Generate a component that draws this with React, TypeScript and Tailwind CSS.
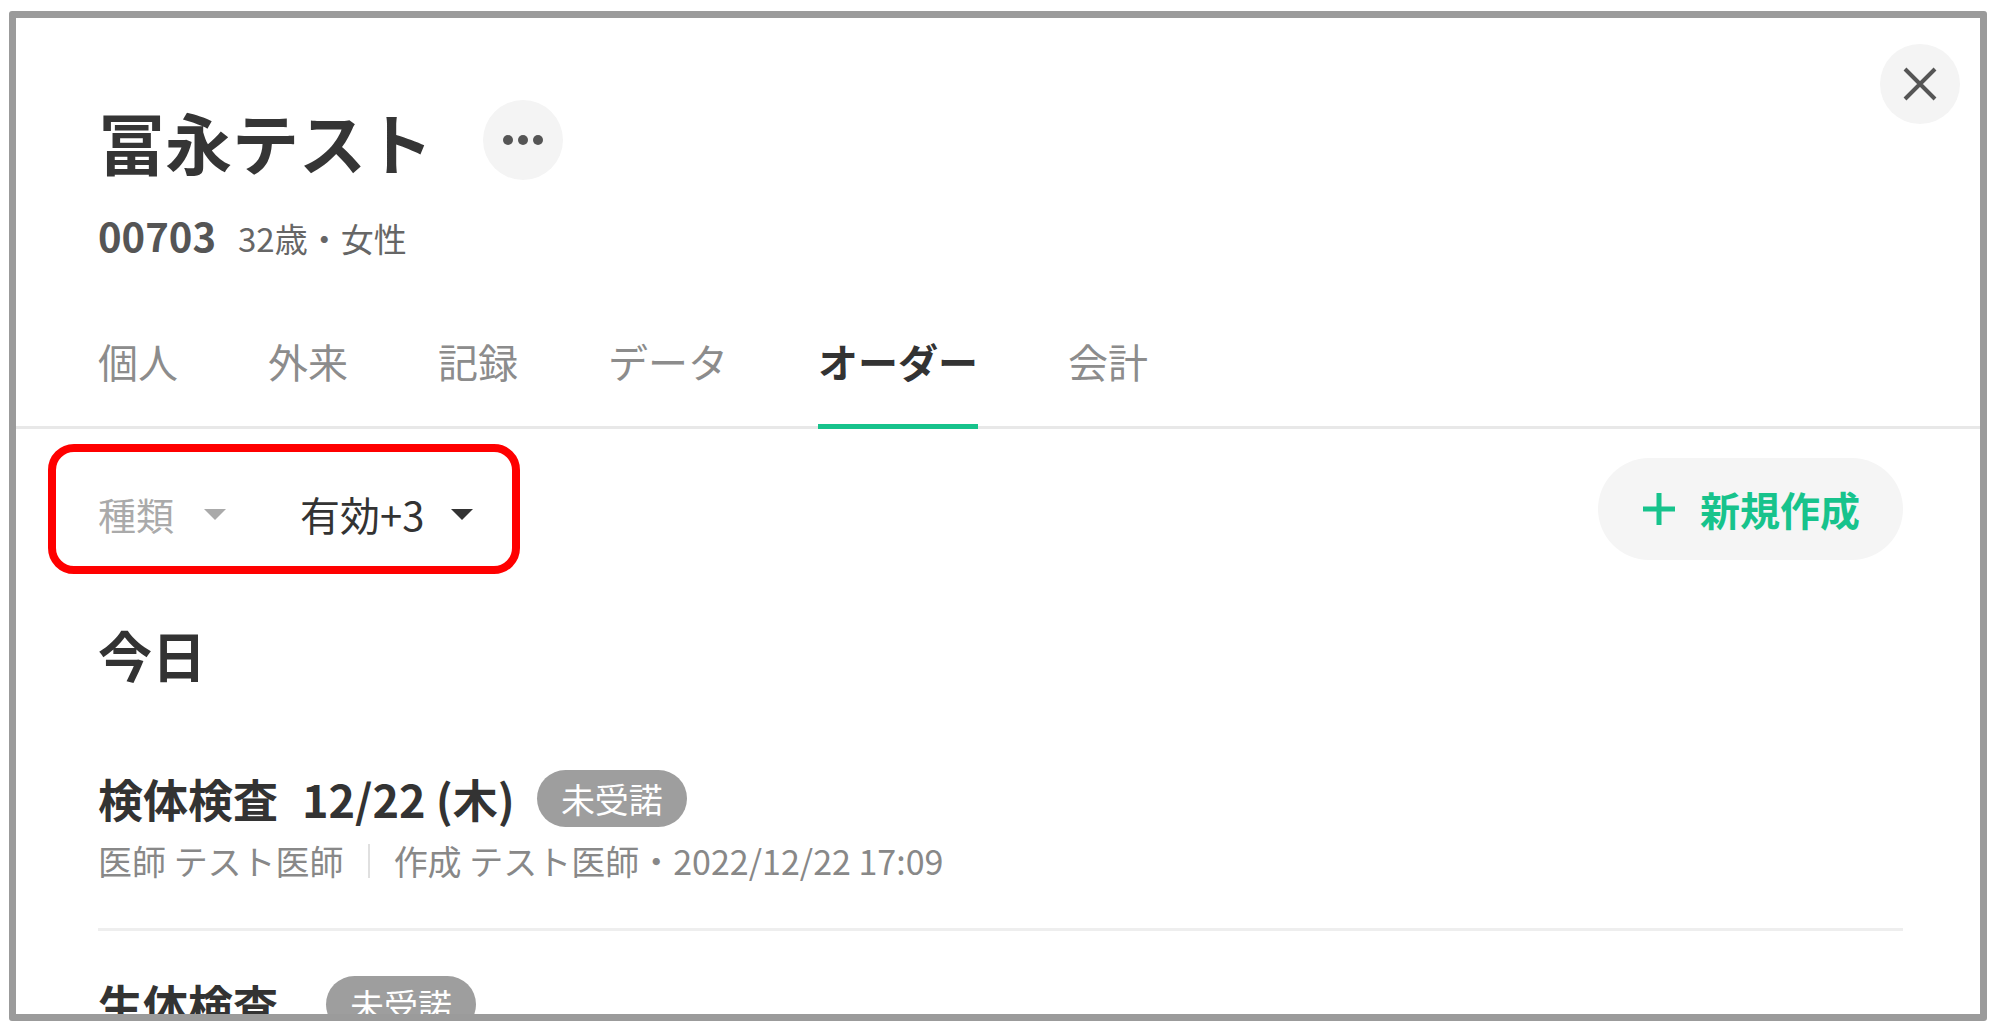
import React from "react";

const tabs = ["個人", "外来", "記録", "データ", "オーダー", "会計"];
const activeTab = "オーダー";

interface OrderItem {
  name: string;
  date?: string;
  status: string;
  gap: string;
  doctor?: string;
  author?: string;
  createdAt?: string;
}

const orders: OrderItem[] = [
  {
    name: "検体検査",
    date: "12/22 (木)",
    status: "未受諾",
    gap: "ml-[22px]",
    doctor: "テスト医師",
    author: "テスト医師",
    createdAt: "2022/12/22 17:09",
  },
  { name: "生体検査", status: "未受諾", gap: "ml-[48px]" },
];

// small filled triangle used by the dropdowns
const Caret = ({ color }: { color: string }) => (
  <svg width="22" height="11" viewBox="0 0 22 11" aria-hidden="true">
    <polygon points="0,0 22,0 11,11" fill={color} />
  </svg>
);

const App: React.FC = () => {
  return (
    <div className="min-h-screen bg-white pl-[9px] pt-[11px] font-['Noto_Sans_CJK_JP','Noto_Sans',sans-serif]">
      <div className="relative h-[1010px] w-[1978px] overflow-hidden rounded-[3px] border-[7px] border-[#9b9b9b] bg-white">
        {/* close button */}
        <button className="absolute right-[20px] top-[26px] flex h-[80px] w-[80px] items-center justify-center rounded-full bg-[#f4f4f4]">
          <svg width="34" height="34" viewBox="0 0 34 34" aria-hidden="true">
            <path d="M2 2L32 32M32 2L2 32" stroke="#555" strokeWidth="4" />
          </svg>
        </button>

        {/* patient header */}
        <div className="px-[82px] pt-[82px]">
          <div className="flex h-[80px] items-center">
            <h1 className="text-[67px] font-bold leading-none text-[#353535]">冨永テスト</h1>
            <button className="ml-[50px] flex h-[80px] w-[80px] items-center justify-center gap-[5px] rounded-full bg-[#f4f4f4]">
              <span className="h-[10px] w-[10px] rounded-full bg-[#555]" />
              <span className="h-[10px] w-[10px] rounded-full bg-[#555]" />
              <span className="h-[10px] w-[10px] rounded-full bg-[#555]" />
            </button>
          </div>
          <div className="mt-[35px] flex items-baseline leading-none">
            <span className="text-[40px] font-bold text-[#555]">00703</span>
            <span className="ml-[22px] text-[33px] text-[#666]">32歳・女性</span>
          </div>
        </div>

        {/* tabs */}
        <div className="mt-[86px] flex gap-[90px] border-b-[3px] border-[#e8e8e8] pl-[82px]">
          {tabs.map((tab) => {
            const active = tab === activeTab;
            return (
              <div
                key={tab}
                className={
                  active
                    ? "-mb-[3px] border-b-[5px] border-[#17c38c] pb-[43px] text-[40px] font-bold leading-none text-[#333]"
                    : "-mb-[3px] border-b-[5px] border-transparent pb-[43px] text-[40px] leading-none text-[#8c8c8c]"
                }
              >
                {tab}
              </div>
            );
          })}
        </div>

        <div className="pl-[82px] pr-[77px]">
          {/* filters + create */}
          <div className="mt-[29px] flex h-[102px] items-center justify-between">
            <div className="relative flex items-center pt-[10px] text-[40px] leading-none">
              <div className="pointer-events-none absolute left-[-50px] top-[-40px] h-[130px] w-[472px] rounded-[26px] border-[8px] border-[#ff0000]" />
              <span className="text-[38px] text-[#aaa]">種類</span>
              <span className="ml-[30px]">
                <Caret color="#aaa" />
              </span>
              <span className="ml-[74px] text-[#333]">有効+3</span>
              <span className="ml-[27px]">
                <Caret color="#333" />
              </span>
            </div>
            <button className="flex h-[102px] w-[305px] items-center rounded-full bg-[#f5f5f5] pl-[45px]">
              <svg width="32" height="32" viewBox="0 0 32 32" aria-hidden="true">
                <path d="M16 0V32M0 16H32" stroke="#17c38c" strokeWidth="5" />
              </svg>
              <span className="ml-[25px] text-[40px] font-bold leading-none text-[#17c38c]">新規作成</span>
            </button>
          </div>

          <h2 className="mt-[68px] text-[54px] font-bold leading-none text-[#333]">今日</h2>

          {orders.map((order, i) => (
            <div key={order.name} className={i === 0 ? "mt-[88px]" : "mt-[45px]"}>
              <div className="flex h-[57px] items-center">
                <span className="text-[45px] font-bold leading-none text-[#333]">{order.name}</span>
                {order.date && (
                  <span className="ml-[24px] text-[45px] font-bold leading-none text-[#333]">{order.date}</span>
                )}
                <span
                  className={`${order.gap} flex h-[57px] items-center rounded-full bg-[#9e9e9e] px-[24px] text-[34px] leading-none text-white`}
                >
                  {order.status}
                </span>
              </div>
              {order.doctor && (
                <>
                  <div className="mt-[17px] flex items-center text-[34px] leading-none text-[#888]">
                    <span>医師 {order.doctor}</span>
                    <span className="mx-[24px] h-[34px] w-[2px] bg-[#e0e0e0]" />
                    <span>
                      作成 {order.author}・{order.createdAt}
                    </span>
                  </div>
                  <div className="mt-[50px] h-[3px] bg-[#eeeeee]" />
                </>
              )}
            </div>
          ))}
        </div>
      </div>
    </div>
  );
};

export default App;
